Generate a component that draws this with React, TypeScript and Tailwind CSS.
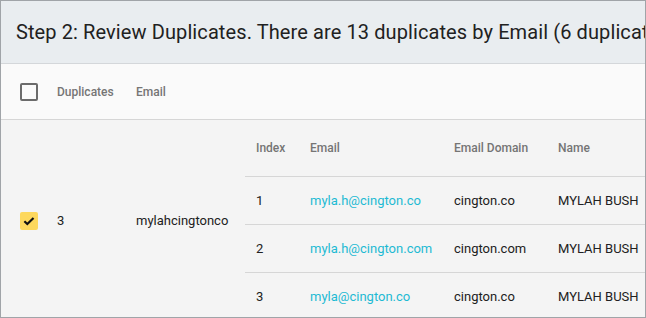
import React from 'react';

const rows = [
  { index: 1, email: 'myla.h@cington.co', domain: 'cington.co', name: 'MYLAH BUSH' },
  { index: 2, email: 'myla.h@cington.com', domain: 'cington.com', name: 'MYLAH BUSH' },
  { index: 3, email: 'myla@cington.co', domain: 'cington.co', name: 'MYLAH BUSH' },
];

function CheckIcon() {
  return (
    <svg viewBox="0 0 18 18" className="h-[16px] w-[16px]">
      <path d="M3.8 9.2l3.3 3.3 7-7" fill="none" stroke="#111" strokeWidth="2.4" />
    </svg>
  );
}

export default function App() {
  return (
    <div
      className="w-[646px] h-[318px] overflow-hidden border border-[#a0a4a8] bg-[#f4f4f4] text-[#212121]"
      style={{ fontFamily: 'Roboto, "Liberation Sans", sans-serif' }}
    >
      {/* Title */}
      <div className="h-[63px] border-b border-[#d4d7da] bg-[#e9edf0] pl-[15px] flex items-center whitespace-nowrap overflow-hidden">
        <span className="text-[20px] leading-none tracking-[0.1px]">
          Step 2: Review Duplicates. There are 13 duplicates by Email (6 duplicates by Name)
        </span>
      </div>

      {/* Table header */}
      <div className="h-[56px] border-b border-[#d6d6d6] bg-[#fafafa] flex items-center text-[12px] font-medium text-[#757575]">
        <div className="w-[56px] pl-[19px]">
          <div className="h-[18px] w-[18px] rounded-[2px] border-2 border-[#6b6b6b]" />
        </div>
        <div className="w-[79px]">Duplicates</div>
        <div>Email</div>
      </div>

      {/* Body */}
      <div className="flex">
        <div className="flex items-center w-[244px] text-[13px]">
          <div className="w-[56px] pl-[19px]">
            <div className="h-[18px] w-[18px] rounded-[2px] bg-[#fdd85d] flex items-center justify-center">
              <CheckIcon />
            </div>
          </div>
          <div className="w-[79px]">3</div>
          <div>mylahcingtonco</div>
        </div>

        <div className="flex-1">
          <div className="h-[57px] border-b border-[#d6d6d6] flex items-center text-[12px] font-medium text-[#757575] whitespace-nowrap">
            <div className="w-[54px] pl-[11px]">Index</div>
            <div className="w-[144px] pl-[11px]">Email</div>
            <div className="w-[104px] pl-[11px]">Email Domain</div>
            <div className="pl-[11px]">Name</div>
          </div>
          {rows.map((r) => (
            <div
              key={r.index}
              className="h-[48px] border-b border-[#d6d6d6] flex items-center text-[13px] whitespace-nowrap"
            >
              <div className="w-[54px] pl-[11px]">{r.index}</div>
              <div className="w-[144px] pl-[11px] text-[#1ebad3]">{r.email}</div>
              <div className="w-[104px] pl-[11px]">{r.domain}</div>
              <div className="pl-[11px]">{r.name}</div>
            </div>
          ))}
        </div>
      </div>
    </div>
  );
}
